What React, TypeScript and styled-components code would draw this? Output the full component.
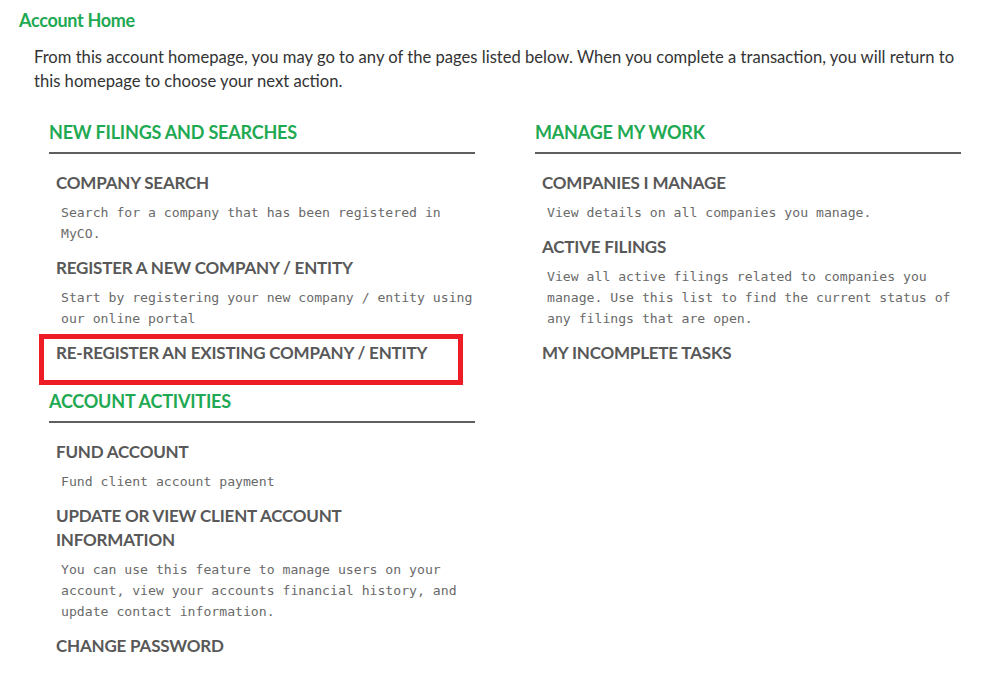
import React from "react";
import styled, { createGlobalStyle } from "styled-components";

const GlobalStyle = createGlobalStyle`
  html, body { margin: 0; padding: 0; background: #ffffff; }
  body { font-family: Lato, "Open Sans", Arial, sans-serif; }
  * { box-sizing: border-box; }
`;

const Page = styled.div`
  padding: 8px 0 0 19px;
  width: 993px;
`;

const PageTitle = styled.h1`
  margin: 0;
  font-size: 18px;
  line-height: 24px;
  font-weight: 700;
  color: #1fa953;
  letter-spacing: -0.3px;
`;

const Intro = styled.p`
  margin: 13px 0 0 15px;
  width: 935px;
  font-size: 16.6px;
  line-height: 24px;
  color: #333333;
`;

const Columns = styled.div`
  display: grid;
  grid-template-columns: 426px 426px;
  column-gap: 60px;
  margin: 27px 0 0 30px;
  align-items: start;
`;

const Column = styled.div`
  display: flex;
  flex-direction: column;
`;

const Section = styled.section<{ $first?: boolean }>`
  margin-top: ${(p) => (p.$first ? "0" : "12px")};
`;

const SectionHeading = styled.h2`
  margin: 0;
  font-size: 18px;
  line-height: 24px;
  font-weight: 700;
  color: #1fa953;
  letter-spacing: -0.2px;
  padding-bottom: 8px;
  border-bottom: 2px solid #5f5f5f;
`;

const ItemList = styled.div`
  padding-top: 17px;
`;

const Item = styled.div`
  position: relative;
  padding-bottom: 12px;
`;

const ItemTitle = styled.h3`
  margin: 0;
  padding-left: 7px;
  max-width: 400px;
  font-size: 17px;
  line-height: 24px;
  font-weight: 700;
  color: #585858;
  letter-spacing: -0.2px;
`;

const ItemDesc = styled.p`
  margin: 7px 0 0 12px;
  font-family: "DejaVu Sans Mono", "Liberation Mono", monospace;
  font-size: 13.15px;
  line-height: 21px;
  color: #6a6a6a;
`;

const Highlight = styled.div`
  position: absolute;
  left: -10px;
  top: -7px;
  width: 424px;
  height: 51px;
  border: 5px solid #ee1c25;
  pointer-events: none;
`;

type Entry = { title: string; desc?: string; highlighted?: boolean };
type Group = { heading: string; items: Entry[] };

const leftGroups: Group[] = [
  {
    heading: "NEW FILINGS AND SEARCHES",
    items: [
      { title: "COMPANY SEARCH", desc: "Search for a company that has been registered in MyCO." },
      {
        title: "REGISTER A NEW COMPANY / ENTITY",
        desc: "Start by registering your new company / entity using our online portal",
      },
      { title: "RE-REGISTER AN EXISTING COMPANY / ENTITY", highlighted: true },
    ],
  },
  {
    heading: "ACCOUNT ACTIVITIES",
    items: [
      { title: "FUND ACCOUNT", desc: "Fund client account payment" },
      {
        title: "UPDATE OR VIEW CLIENT ACCOUNT INFORMATION",
        desc: "You can use this feature to manage users on your account, view your accounts financial history, and update contact information.",
      },
      { title: "CHANGE PASSWORD" },
    ],
  },
];

const rightGroups: Group[] = [
  {
    heading: "MANAGE MY WORK",
    items: [
      { title: "COMPANIES I MANAGE", desc: "View details on all companies you manage." },
      {
        title: "ACTIVE FILINGS",
        desc: "View all active filings related to companies you manage. Use this list to find the current status of any filings that are open.",
      },
      { title: "MY INCOMPLETE TASKS" },
    ],
  },
];

const Groups = ({ groups }: { groups: Group[] }) => (
  <Column>
    {groups.map((g, i) => (
      <Section key={g.heading} $first={i === 0}>
        <SectionHeading>{g.heading}</SectionHeading>
        <ItemList>
          {g.items.map((it) => (
            <Item key={it.title}>
              <ItemTitle>{it.title}</ItemTitle>
              {it.desc && <ItemDesc>{it.desc}</ItemDesc>}
              {it.highlighted && <Highlight />}
            </Item>
          ))}
        </ItemList>
      </Section>
    ))}
  </Column>
);

export default function App() {
  return (
    <>
      <GlobalStyle />
      <Page>
        <PageTitle>Account Home</PageTitle>
        <Intro>
          From this account homepage, you may go to any of the pages listed below. When you complete a
          transaction, you will return to this homepage to choose your next action.
        </Intro>
        <Columns>
          <Groups groups={leftGroups} />
          <Groups groups={rightGroups} />
        </Columns>
      </Page>
    </>
  );
}
